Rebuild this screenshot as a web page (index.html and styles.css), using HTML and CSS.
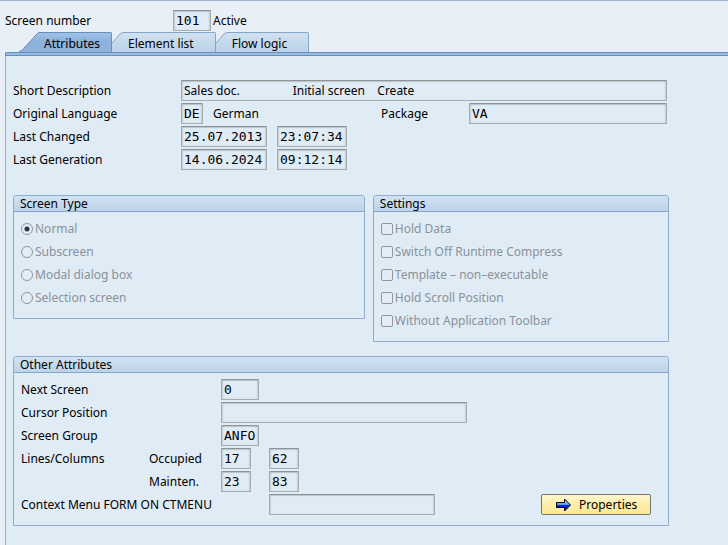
FILE: index.html
```html
<!DOCTYPE html>
<html lang="en">
<head>
  <meta charset="UTF-8" />
  <meta name="viewport" content="width=device-width, initial-scale=1.0"/>
  <title>Screen Painter: Attributes</title>
  <link rel="stylesheet" href="styles.css">
</head>
<body>
  <header class="header">
    <label class="header-label" for="screenNumber">Screen number</label>
    <input class="field mono w-4" type="text" id="screenNumber" value="101" readonly />
    <span class="status">Active</span>
  </header>

  <nav class="tabs" role="tablist">
    <button class="tab active" role="tab" aria-selected="true">
      <svg class="slope" width="20" height="20" viewBox="0 0 20 20">
        <defs>
          <linearGradient id="gradActive" x1="0" y1="0" x2="0" y2="1">
            <stop offset="0" stop-color="#9fc1e4"/>
            <stop offset="0.5" stop-color="#8cb0da"/>
            <stop offset="1" stop-color="#91b4dc"/>
          </linearGradient>
        </defs>
        <path d="M0 20 C3 19 4 17 6 15 L17 3 Q19 0.5 20 0.5 V20 Z" fill="url(#gradActive)"/>
        <path d="M0 19.5 C3 19 4 17 6 15 L17 3 Q19 0.5 20 0.5" fill="none" stroke="#6590bd"/>
      </svg>
      <span class="tab-text">Attributes</span>
    </button>
    <button class="tab" role="tab" aria-selected="false">
      <svg class="slope" width="11" height="20" viewBox="0 0 11 20">
        <defs>
          <linearGradient id="gradTab" x1="0" y1="0" x2="0" y2="1">
            <stop offset="0" stop-color="#d0e0f0"/>
            <stop offset="1" stop-color="#bbd2e9"/>
          </linearGradient>
        </defs>
        <path d="M0 11 L9 1.5 L11 0.5 V20 H0 Z" fill="url(#gradTab)"/>
        <path d="M0 11 L8 2 Q9.5 0.5 11 0.5" fill="none" stroke="#86a6c8"/>
      </svg>
      <span class="tab-text">Element list</span>
    </button>
    <button class="tab" role="tab" aria-selected="false">
      <svg class="slope" width="11" height="20" viewBox="0 0 11 20">
        <path d="M0 11 L9 1.5 L11 0.5 V20 H0 Z" fill="url(#gradTab)"/>
        <path d="M0 11 L8 2 Q9.5 0.5 11 0.5" fill="none" stroke="#86a6c8"/>
      </svg>
      <span class="tab-text">Flow logic</span>
    </button>
  </nav>
  <div class="band"></div>

  <main class="panel">
    <form class="content">
      <section class="rows">
        <div class="row">
          <label class="label" for="shortDesc">Short Description</label>
          <input class="field grow" type="text" id="shortDesc" value="Sales doc.                 Initial screen    Create" readonly />
        </div>
        <div class="row">
          <label class="label" for="language">Original Language</label>
          <input class="field mono w-2" type="text" id="language" value="DE" readonly />
          <span class="language-name">German</span>
          <label class="package-label" for="package">Package</label>
          <input class="field mono grow" type="text" id="package" value="VA" readonly />
        </div>
        <div class="row">
          <label class="label" for="changedDate">Last Changed</label>
          <input class="field mono w-date" type="text" id="changedDate" value="25.07.2013" readonly />
          <input class="field mono w-time" type="text" aria-label="Last Changed time" value="23:07:34" readonly />
        </div>
        <div class="row">
          <label class="label" for="generatedDate">Last Generation</label>
          <input class="field mono w-date" type="text" id="generatedDate" value="14.06.2024" readonly />
          <input class="field mono w-time" type="text" aria-label="Last Generation time" value="09:12:14" readonly />
        </div>
      </section>

      <div class="groups">
        <section class="group screen-type">
          <h2 class="group-title">Screen Type</h2>
          <div class="rows group-body">
            <label class="option"><input class="radio" type="radio" name="type" checked disabled />Normal</label>
            <label class="option"><input class="radio" type="radio" name="type" disabled />Subscreen</label>
            <label class="option"><input class="radio" type="radio" name="type" disabled />Modal dialog box</label>
            <label class="option"><input class="radio" type="radio" name="type" disabled />Selection screen</label>
          </div>
        </section>

        <section class="group settings">
          <h2 class="group-title">Settings</h2>
          <div class="rows group-body">
            <label class="option"><input class="check" type="checkbox" disabled />Hold Data</label>
            <label class="option"><input class="check" type="checkbox" disabled />Switch Off Runtime Compress</label>
            <label class="option"><input class="check" type="checkbox" disabled />Template – non–executable</label>
            <label class="option"><input class="check" type="checkbox" disabled />Hold Scroll Position</label>
            <label class="option"><input class="check" type="checkbox" disabled />Without Application Toolbar</label>
          </div>
        </section>
      </div>

      <section class="group">
        <h2 class="group-title">Other Attributes</h2>
        <div class="rows group-body">
          <div class="row">
            <label class="label-wide" for="nextScreen">Next Screen</label>
            <input class="field mono w-4" type="text" id="nextScreen" value="0" readonly />
          </div>
          <div class="row">
            <label class="label-wide" for="cursor">Cursor Position</label>
            <input class="field mono w-cursor" type="text" id="cursor" readonly />
          </div>
          <div class="row">
            <label class="label-wide" for="screenGroup">Screen Group</label>
            <input class="field mono w-4" type="text" id="screenGroup" value="ANFO" readonly />
          </div>
          <div class="row">
            <span class="label-lines">Lines/Columns</span>
            <label class="label-sub" for="occupied">Occupied</label>
            <input class="field mono w-3" type="text" id="occupied" value="17" readonly />
            <input class="field mono w-3 columns" type="text" aria-label="Occupied columns" value="62" readonly />
          </div>
          <div class="row">
            <span class="label-lines"></span>
            <label class="label-sub" for="mainten">Mainten.</label>
            <input class="field mono w-3" type="text" id="mainten" value="23" readonly />
            <input class="field mono w-3 columns" type="text" aria-label="Mainten. columns" value="83" readonly />
          </div>
          <div class="row">
            <label class="label-context" for="contextMenu">Context Menu FORM ON CTMENU</label>
            <input class="field mono w-context" type="text" id="contextMenu" readonly />
            <button class="properties" type="button">
              <svg width="16" height="14" viewBox="0 0 16 14">
                <defs>
                  <linearGradient id="gradArrow" x1="0" y1="0" x2="0" y2="1">
                    <stop offset="0.15" stop-color="#8fd8ff"/>
                    <stop offset="0.48" stop-color="#3f9cf5"/>
                    <stop offset="0.52" stop-color="#0a28e8"/>
                    <stop offset="1" stop-color="#0000d0"/>
                  </linearGradient>
                </defs>
                <path d="M0.5 4.5 H8.5 V1 L14.5 7 L8.5 13 V9.5 H0.5 Z" fill="url(#gradArrow)" stroke="#000"/>
              </svg>
              Properties
            </button>
          </div>
        </div>
      </section>
    </form>
  </main>
</body>
</html>
```

FILE: styles.css
```css
* { margin: 0; padding: 0; box-sizing: border-box; }

body {
  display: flex;
  flex-direction: column;
  min-height: 100vh;
  border-top: 1px solid #a3b5cc;
  background: #e8eff7;
  color: #000;
  font-family: 'Noto Sans', sans-serif;
  font-size: 12px;
  line-height: 21px;
}

input, button {
  font: inherit;
  color: inherit;
}

.header {
  display: flex;
  padding: 9px 5px 1px;
}

.header-label {
  width: 168px;
}

.status {
  margin-left: 2px;
}

/* fields */
.field {
  height: 21px;
  padding: 0 2px;
  border: 1px solid #a9adb0;
  border-top-color: #8f9396;
  border-radius: 1px;
  background: #dfebf5;
  box-shadow: inset 0 1px 1px #b9c2c9, inset 1px 0 1px #c6cfd6, inset -1px 0 1px #c6cfd6;
  line-height: 17px;
  outline: none;
}

.mono {
  font-family: 'DejaVu Sans Mono', monospace;
  font-size: 13px;
}

.w-2 { width: 22px; }
.w-3 { width: 30px; }
.w-4 { width: 38px; }
.w-date { width: 86px; }
.w-time { width: 70px; margin-left: 10px; }
.w-cursor { width: 246px; }
.w-context { width: 166px; }
.grow { flex: 1; min-width: 0; }

/* tabs */
.tabs {
  display: flex;
  padding-left: 19px;
}

.tab {
  display: flex;
  height: 20px;
  border: none;
  background: none;
}

.slope {
  display: block;
}

.tab-text {
  height: 20px;
  padding: 0 21px 0 5px;
  border-top: 1px solid #86a6c8;
  border-right: 1px solid #86a6c8;
  border-top-right-radius: 2px;
  background: linear-gradient(#d0e0f0, #bbd2e9);
}

.active .tab-text {
  padding-right: 11px;
  border-color: #6590bd;
  background: linear-gradient(#9fc1e4, #8cb0da 50%, #91b4dc);
}

.band {
  height: 4px;
  margin-left: 5px;
  border: solid #6590bd;
  border-width: 1px 0 1px 1px;
  border-top-left-radius: 2px;
  background: #9bbce0;
}

.panel {
  flex: 1;
  margin-left: 5px;
  padding: 24px 7px 19px;
  border-left: 1px solid #94b1d2;
  background: #dfebf5;
}

.content {
  max-width: 656px;
}

.rows {
  display: flex;
  flex-direction: column;
  gap: 2px;
}

.row {
  display: flex;
  padding-right: 2px;
}

.label { width: 168px; }
.label-wide { width: 200px; }
.label-lines { width: 128px; }
.label-sub { width: 72px; }
.label-context { width: 248px; }
.columns { margin-left: 18px; }

.language-name {
  width: 168px;
  margin-left: 10px;
}

.package-label {
  width: 88px;
}

/* groups */
.groups {
  display: flex;
  align-items: flex-start;
  gap: 8px;
  margin: 25px 0 14px;
}

.screen-type { flex: 352 1 0; }
.settings { flex: 296 1 0; }

.group {
  border: 1px solid #8eadcf;
  border-radius: 3px 3px 0 0;
}

.group-title {
  height: 16px;
  padding-left: 6px;
  border-bottom: 1px solid #86a5c8;
  border-radius: 2px 2px 0 0;
  background: linear-gradient(#d2e2f1, #bdd3e9);
  font-size: 12px;
  font-weight: normal;
  line-height: 15px;
}

.group-body {
  padding: 6px 7px 10px;
}

.option {
  display: flex;
  align-items: center;
  gap: 2px;
  color: #8b9299;
}

.radio, .check {
  appearance: none;
  width: 12px;
  height: 12px;
  border: 1px solid #92979b;
  background: #e3edf6;
}

.radio { border-radius: 50%; }
.check { border-radius: 2px; }

.radio:checked {
  background: radial-gradient(circle, #2c3350 2px, #e3edf6 3px);
}

.properties {
  display: flex;
  align-items: center;
  gap: 7px;
  width: 110px;
  height: 21px;
  margin-left: auto;
  margin-right: 8px;
  padding-left: 14px;
  border: 1px solid #77756a;
  border-radius: 2px;
  background: linear-gradient(#fff6d0, #fdeea8 50%, #fbe795);
}
```
